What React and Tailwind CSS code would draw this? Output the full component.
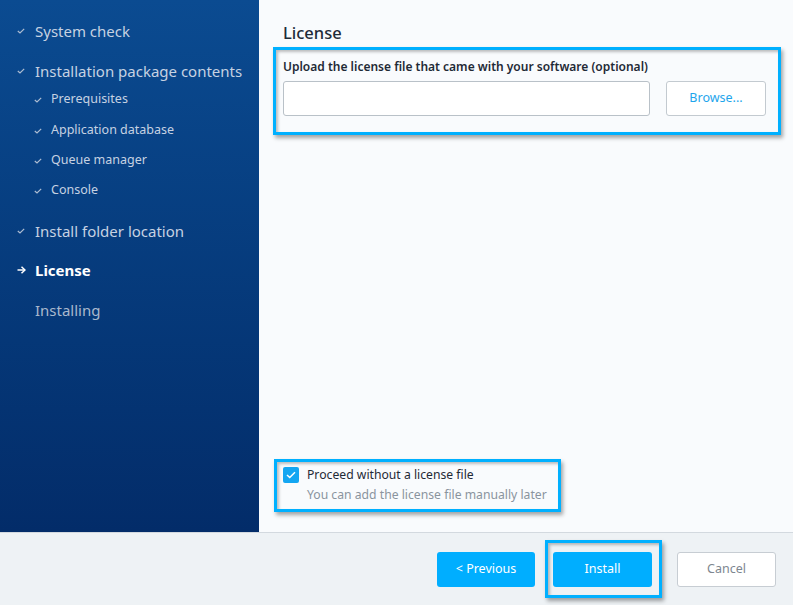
import React from 'react';

const Check = ({ className }) => (
  <svg viewBox="0 0 8 6" className={className} fill="none" stroke="currentColor" strokeWidth="1.2">
    <polyline points="0.8,3 3,5 7.2,0.8" />
  </svg>
);

const Arrow = () => (
  <svg viewBox="0 0 9 8" className="w-[9px] h-[8px]" fill="none" stroke="currentColor" strokeWidth="1.5">
    <line x1="0.5" y1="4" x2="8" y2="4" />
    <polyline points="4.5,0.8 8,4 4.5,7.2" />
  </svg>
);

const steps = [
  { label: 'System check', kind: 'done', y: 'mt-[20px]' },
  { label: 'Installation package contents', kind: 'done', y: 'mt-[18px]' },
  { label: 'Prerequisites', kind: 'sub', y: 'mt-[7px]' },
  { label: 'Application database', kind: 'sub', y: 'mt-[10px]' },
  { label: 'Queue manager', kind: 'sub', y: 'mt-[9px]' },
  { label: 'Console', kind: 'sub', y: 'mt-[9px]' },
  { label: 'Install folder location', kind: 'done', y: 'mt-[19px]' },
  { label: 'License', kind: 'current', y: 'mt-[17px]' },
  { label: 'Installing', kind: 'todo', y: 'mt-[18px]' },
];

const highlight =
  'border-[3px] border-[#00b0ff] shadow-[2px_3px_4px_rgba(0,0,0,0.35),inset_2px_2px_3px_rgba(0,0,0,0.25)]';

const App = () => {
  return (
    <div className="w-[793px] h-[605px] flex flex-col overflow-hidden font-['Noto_Sans',sans-serif]">
      <div className="flex flex-1 min-h-0">
        {/* Sidebar */}
        <div className="w-[259px] bg-gradient-to-b from-[#0b4b91] to-[#032c69] flex flex-col">
          {steps.map((s) => {
            if (s.kind === 'sub') {
              return (
                <div key={s.label} className={`flex items-center h-[21px] pl-[34px] text-[12.5px] text-[#c6d2e2] ${s.y}`}>
                  <Check className="w-[8px] h-[6px] text-[#aebdd2]" />
                  <span className="ml-[9px]">{s.label}</span>
                </div>
              );
            }
            return (
              <div
                key={s.label}
                className={`flex items-center h-[22px] pl-[17px] text-[15px] ${s.y} ${
                  s.kind === 'current' ? 'text-white font-bold' : s.kind === 'todo' ? 'text-[#a9b8cd]' : 'text-[#c6d2e2]'
                }`}
              >
                <span className="w-[18px] flex items-center">
                  {s.kind === 'done' && <Check className="w-[8px] h-[6px] text-[#aebdd2]" />}
                  {s.kind === 'current' && <Arrow />}
                </span>
                <span>{s.label}</span>
              </div>
            );
          })}
        </div>

        {/* Main */}
        <div className="flex-1 bg-[#f9fbfd] pl-[14px] pr-[12px] flex flex-col">
          <h1 className="mt-[22px] ml-[10px] text-[16.5px] font-medium text-[#1e2b38] leading-[22px]">License</h1>
          <div className={`mt-[3px] ${highlight} pl-[7px] pr-[11px] pt-[9px] pb-[16px]`}>
            <div className="text-[12px] font-semibold text-[#1f2a36] leading-[16px]">
              Upload the license file that came with your software (optional)
            </div>
            <div className="flex mt-[6px] gap-[16px]">
              <div className="w-[367px] h-[35px] bg-white border border-[#b9c1c8] rounded-[3px]" />
              <button className="w-[100px] h-[35px] bg-white border border-[#c3cad0] rounded-[3px] text-[12.5px] text-[#1ea5ec]">
                Browse...
              </button>
            </div>
          </div>

          <div className="flex-1" />

          <div className={`self-start ml-[1px] mb-[20px] ${highlight} pl-[6px] pr-[11px] pt-[4px] pb-[5px]`}>
            <div className="flex items-start">
              <div className="w-[16px] h-[16px] bg-[#14a6f2] rounded-[2px] flex items-center justify-center mt-[1px]">
                <Check className="w-[10px] h-[8px] text-white" />
              </div>
              <div className="ml-[8px]">
                <div className="text-[12.2px] text-[#1f2a36] leading-[18px]">Proceed without a license file</div>
                <div className="text-[12.2px] text-[#8a949e] leading-[18px] mt-[2px]">
                  You can add the license file manually later
                </div>
              </div>
            </div>
          </div>
        </div>
      </div>

      {/* Footer */}
      <div className="h-[73px] border-t border-[#d3d9df] bg-[#eef2f5] flex items-start justify-end pr-[17px] pt-[7px]">
        <button className="mt-[12px] w-[98px] h-[35px] bg-[#00aeff] rounded-[3px] text-white text-[12.5px]">
          &lt; Previous
        </button>
        <div className={`ml-[10px] ${highlight} pl-[5px] pr-[7px] pt-[9px] pb-[8px]`}>
          <button className="w-[99px] h-[35px] bg-[#00aeff] rounded-[3px] text-white text-[12.5px]">Install</button>
        </div>
        <button className="mt-[12px] ml-[15px] w-[99px] h-[35px] bg-white border border-[#c7cdd3] rounded-[3px] text-[#7d868f] text-[12.5px]">
          Cancel
        </button>
      </div>
    </div>
  );
};

export default App;
